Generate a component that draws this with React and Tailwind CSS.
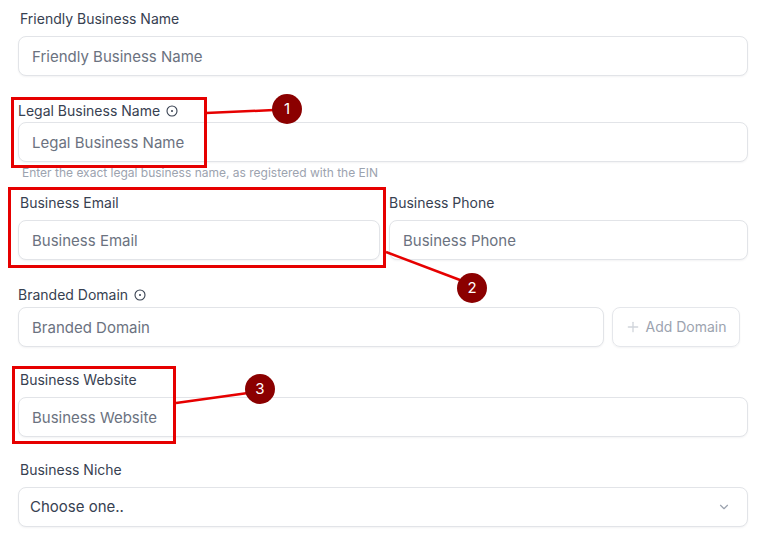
import { ChevronDown, Plus } from 'lucide-react'

const inputClass = 'w-full h-10 bg-white border border-[#e2e4e8] rounded-lg px-[13px] text-[15px] text-[#374151] placeholder:text-[#6b7280] shadow-[0_1px_2px_rgba(16,24,40,0.05)] outline-none'

function InfoIcon() {
  return (
    <svg width="12" height="12" viewBox="0 0 12 12" fill="none" className="ml-[6px] text-[#374151]">
      <circle cx="6" cy="6" r="5" stroke="currentColor" strokeWidth="1.1" />
      <circle cx="6" cy="6" r="1" fill="currentColor" />
    </svg>
  )
}

function Label({ text, info, className }) {
  return (
    <div className={`flex items-center h-5 text-sm text-[#374151] ${className}`}>
      <span>{text}</span>
      {info && <InfoIcon />}
    </div>
  )
}

function Marker({ n, className }) {
  return (
    <div className={`absolute w-[30px] h-[30px] rounded-full bg-[#8b0000] text-white text-[15px] flex items-center justify-center ${className}`}>
      {n}
    </div>
  )
}

export default function App() {
  return (
    <div className="relative w-[769px] h-[541px] overflow-hidden bg-white font-['Inter',sans-serif]">
      <div className="pt-[9px] pl-[18px] pr-[21px]">
        {/* Friendly name */}
        <Label text="Friendly Business Name" className="pl-[2px]" />
        <input className={`${inputClass} mt-[7px]`} placeholder="Friendly Business Name" />

        {/* Legal name */}
        <Label text="Legal Business Name" info className="mt-[25px]" />
        <input className={`${inputClass} mt-[1px]`} placeholder="Legal Business Name" />
        <p className="mt-[3px] pl-1 text-xs leading-4 text-[#9ca3af]">Enter the exact legal business name, as registered with the EIN</p>

        {/* Email + phone */}
        <div className="mt-[12px] flex gap-[9px]">
          <div className="w-[362px]">
            <Label text="Business Email" className="pl-[2px]" />
            <input className={`${inputClass} mt-[7px]`} placeholder="Business Email" />
          </div>
          <div className="flex-1">
            <Label text="Business Phone" />
            <input className={`${inputClass} mt-[7px]`} placeholder="Business Phone" />
          </div>
        </div>

        {/* Domain */}
        <Label text="Branded Domain" info className="mt-[25px]" />
        <div className="mt-[2px] flex gap-2 pr-2">
          <input className={`${inputClass} flex-1`} placeholder="Branded Domain" />
          <button className="w-[128px] h-10 shrink-0 flex items-center justify-center border border-[#e5e7eb] rounded-lg text-sm text-[#9ca3af] shadow-[0_1px_2px_rgba(16,24,40,0.05)]">
            <Plus size={16} className="mr-1 text-[#d1d5db]" />
            Add Domain
          </button>
        </div>

        {/* Website */}
        <Label text="Business Website" className="mt-[23px] pl-[2px]" />
        <input className={`${inputClass} mt-[7px]`} placeholder="Business Website" />

        {/* Niche */}
        <Label text="Business Niche" className="mt-[23px] pl-[2px]" />
        <div className={`${inputClass} mt-[7px] flex items-center justify-between !pl-[11px] !pr-4`}>
          <span>Choose one..</span>
          <ChevronDown size={14} className="text-[#9ca3af]" />
        </div>
      </div>

      {/* Annotations */}
      <div className="absolute left-[11px] top-[97px] w-[196px] h-[71px] border-[3px] border-[#e60000]" />
      <div className="absolute left-[8px] top-[187px] w-[378px] h-[81px] border-[3px] border-[#e60000]" />
      <div className="absolute left-[12px] top-[366px] w-[164px] h-[78px] border-[3px] border-[#e60000]" />
      <svg className="absolute inset-0 pointer-events-none" width="769" height="541" fill="none" stroke="#e60000" strokeWidth="2.5">
        <path d="M206 113L274 110" />
        <path d="M386 252L460 280" />
        <path d="M176 403L248 393" />
      </svg>
      <Marker n="1" className="left-[272px] top-[94px]" />
      <Marker n="2" className="left-[457px] top-[273px]" />
      <Marker n="3" className="left-[245px] top-[374px]" />
    </div>
  )
}
